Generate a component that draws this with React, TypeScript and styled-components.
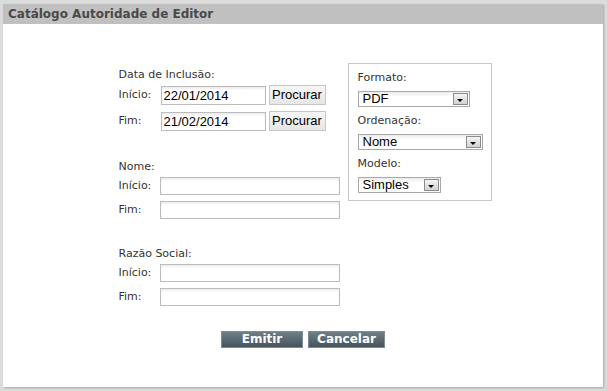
import React from 'react';
import styled, { createGlobalStyle } from 'styled-components';

const GlobalStyle = createGlobalStyle`
  html, body {
    margin: 0;
    padding: 0;
    background: #dcdcdc;
  }
  body {
    font-family: "DejaVu Sans", Verdana, sans-serif;
  }
`;

const Window = styled.div`
  margin: 4px 4px 4px 3px;
  height: 383px;
  background: #fff;
  box-shadow: 1px 1px 2px rgba(0, 0, 0, 0.25);
  display: flex;
  flex-direction: column;
`;

const TitleBar = styled.div`
  height: 20px;
  background: #c0c0c0;
  color: #4a4a4a;
  font-weight: bold;
  font-size: 12px;
  line-height: 20px;
  padding-left: 5px;
`;

const Body = styled.div`
  padding-top: 39px;
  display: flex;
  flex-direction: column;
  align-items: center;
`;

const FormRow = styled.div`
  display: flex;
  align-items: flex-start;
  gap: 8px;
  margin-left: 4px;
`;

const LeftCol = styled.div`
  width: 221px;
  padding-top: 5px;
  display: flex;
  flex-direction: column;
`;

const Group = styled.div<{ $top: number }>`
  margin-top: ${p => p.$top}px;
  display: flex;
  flex-direction: column;
  gap: 6px;
`;

const Legend = styled.div`
  font-size: 11px;
  line-height: 14px;
  color: #333;
  margin-bottom: -3px;
`;

const Row = styled.div`
  display: flex;
  align-items: center;
`;

const RowLabel = styled.span`
  width: 42px;
  font-size: 11px;
  line-height: 14px;
  color: #333;
`;

const TextInput = styled.div<{ $w: number; $h: number }>`
  box-sizing: border-box;
  width: ${p => p.$w}px;
  height: ${p => p.$h}px;
  border: 1px solid #bcbcbc;
  background: #fff;
  box-shadow: inset 0 2px 2px rgba(0, 0, 0, 0.07);
  font-family: "Liberation Sans", Arial, sans-serif;
  font-size: 13px;
  line-height: ${p => p.$h - 2}px;
  padding-left: 2px;
  color: #000;
`;

const LightButton = styled.div`
  box-sizing: border-box;
  margin-left: 3px;
  width: 57px;
  height: 20px;
  border: 1px solid #c6c6c6;
  background: linear-gradient(#f6f6f6, #e6e6e6);
  font-family: "Liberation Sans", Arial, sans-serif;
  font-size: 13px;
  line-height: 18px;
  text-align: center;
  color: #000;
`;

const OptionsBox = styled.div`
  box-sizing: border-box;
  width: 144px;
  height: 138px;
  border: 1px solid #c8c8c8;
  padding: 7px 9px 0 9px;
  display: flex;
  flex-direction: column;
  gap: 7px;
`;

const OptionLabel = styled(Legend)`
  margin-bottom: -1px;
`;

const SelectBox = styled.div<{ $w: number }>`
  box-sizing: border-box;
  width: ${p => p.$w}px;
  height: 16px;
  border: 1px solid #a8a8a8;
  background: linear-gradient(#ececec, #fff 5px);
  display: flex;
  align-items: center;
  justify-content: space-between;
  padding: 0 1px 0 4px;
  font-family: "Liberation Sans", Arial, sans-serif;
  font-size: 13px;
  line-height: 14px;
  color: #000;
`;

const SelectArrow = styled.span`
  box-sizing: border-box;
  width: 15px;
  height: 12px;
  border: 1px solid #8c8c8c;
  background: linear-gradient(#f4f4f4, #d2d2d2);
  display: flex;
  align-items: center;
  justify-content: center;

  &::after {
    content: '';
    margin-top: 2px;
    border-left: 3px solid transparent;
    border-right: 3px solid transparent;
    border-top: 3px solid #000;
  }
`;

const Actions = styled.div`
  margin-top: 25px;
  display: flex;
  gap: 5px;
`;

const DarkButton = styled.div<{ $w: number }>`
  box-sizing: border-box;
  width: ${p => p.$w}px;
  height: 17px;
  border: 1px solid #7e8c93;
  background: linear-gradient(#6f7f87, #45545c);
  color: #fff;
  font-weight: bold;
  font-size: 12px;
  line-height: 15px;
  text-align: center;
`;

const Select = ({ value, width }: { value: string; width: number }) => (
  <SelectBox $w={width}>
    <span>{value}</span>
    <SelectArrow />
  </SelectBox>
);

export default function App() {
  return (
    <>
      <GlobalStyle />
      <Window>
        <TitleBar>Catálogo Autoridade de Editor</TitleBar>
        <Body>
          <FormRow>
            <LeftCol>
              <Group $top={0}>
                <Legend>Data de Inclusão:</Legend>
                <Row>
                  <RowLabel>Início:</RowLabel>
                  <TextInput $w={105} $h={19}>22/01/2014</TextInput>
                  <LightButton>Procurar</LightButton>
                </Row>
                <Row>
                  <RowLabel>Fim:</RowLabel>
                  <TextInput $w={105} $h={19}>21/02/2014</TextInput>
                  <LightButton>Procurar</LightButton>
                </Row>
              </Group>
              <Group $top={29}>
                <Legend>Nome:</Legend>
                <Row>
                  <RowLabel>Início:</RowLabel>
                  <TextInput $w={180} $h={18} />
                </Row>
                <Row>
                  <RowLabel>Fim:</RowLabel>
                  <TextInput $w={180} $h={18} />
                </Row>
              </Group>
              <Group $top={28}>
                <Legend>Razão Social:</Legend>
                <Row>
                  <RowLabel>Início:</RowLabel>
                  <TextInput $w={180} $h={18} />
                </Row>
                <Row>
                  <RowLabel>Fim:</RowLabel>
                  <TextInput $w={180} $h={18} />
                </Row>
              </Group>
            </LeftCol>
            <OptionsBox>
              <OptionLabel>Formato:</OptionLabel>
              <Select value="PDF" width={112} />
              <OptionLabel>Ordenação:</OptionLabel>
              <Select value="Nome" width={125} />
              <OptionLabel>Modelo:</OptionLabel>
              <Select value="Simples" width={83} />
            </OptionsBox>
          </FormRow>
          <Actions>
            <DarkButton $w={82}>Emitir</DarkButton>
            <DarkButton $w={77}>Cancelar</DarkButton>
          </Actions>
        </Body>
      </Window>
    </>
  );
}
